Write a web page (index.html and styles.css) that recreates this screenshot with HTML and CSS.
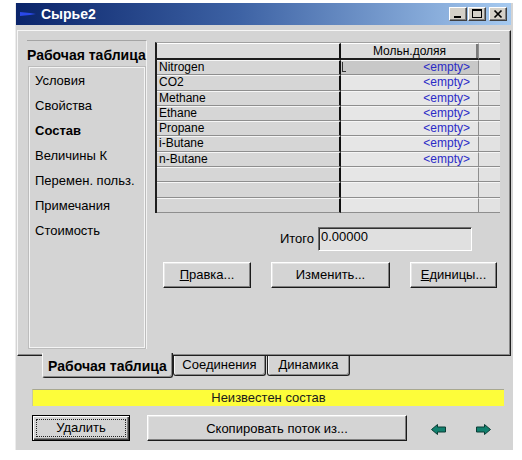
FILE: index.html
```html
<!DOCTYPE html>
<html lang="ru">

<head>
    <meta charset="UTF-8">
    <title>Сырье2</title>
    <link rel="stylesheet" href="styles.css">
</head>

<body>
    <div class="window">
        <div class="titlebar">
            <svg class="title-icon" width="16" height="8" viewBox="0 0 16 8">
                <polygon points="0,2 10,3 16,4 10,5 0,6" fill="#2a48e8" />
            </svg>
            <span class="title">Сырье2</span>
            <div class="title-buttons">
                <span class="tbtn"><svg width="16" height="12" viewBox="0 0 16 12"><rect x="4" y="8" width="7" height="2" fill="#000" /></svg></span>
                <span class="tbtn"><svg width="16" height="12" viewBox="0 0 16 12"><rect x="3.5" y="1.5" width="9" height="8" fill="none" stroke="#000" /><rect x="3" y="1" width="10" height="2" fill="#000" /></svg></span>
                <span class="tbtn close"><svg width="16" height="12" viewBox="0 0 16 12"><path d="M4.5 2.5 L11.5 9.5 M11.5 2.5 L4.5 9.5" stroke="#000" stroke-width="1.7" /></svg></span>
            </div>
        </div>

        <div class="tabpage">
            <div class="nav">
                <div class="nav-head">Рабочая таблица</div>
                <ul class="nav-list">
                    <li>Условия</li>
                    <li>Свойства</li>
                    <li class="current">Состав</li>
                    <li>Величины К</li>
                    <li>Перемен. польз.</li>
                    <li>Примечания</li>
                    <li>Стоимость</li>
                </ul>
            </div>

            <div class="main">
                <div class="grid">
                    <div class="row head">
                        <div class="c1"></div>
                        <div class="c2">Мольн.доляя</div>
                        <div class="c3"></div>
                    </div>
                    <div class="row">
                        <div class="c1">Nitrogen</div>
                        <div class="c2 sel"><span class="mark"></span>&lt;empty&gt;</div>
                        <div class="c3"></div>
                    </div>
                    <div class="row">
                        <div class="c1">CO2</div>
                        <div class="c2">&lt;empty&gt;</div>
                        <div class="c3"></div>
                    </div>
                    <div class="row">
                        <div class="c1">Methane</div>
                        <div class="c2">&lt;empty&gt;</div>
                        <div class="c3"></div>
                    </div>
                    <div class="row">
                        <div class="c1">Ethane</div>
                        <div class="c2">&lt;empty&gt;</div>
                        <div class="c3"></div>
                    </div>
                    <div class="row">
                        <div class="c1">Propane</div>
                        <div class="c2">&lt;empty&gt;</div>
                        <div class="c3"></div>
                    </div>
                    <div class="row">
                        <div class="c1">i-Butane</div>
                        <div class="c2">&lt;empty&gt;</div>
                        <div class="c3"></div>
                    </div>
                    <div class="row">
                        <div class="c1">n-Butane</div>
                        <div class="c2">&lt;empty&gt;</div>
                        <div class="c3"></div>
                    </div>
                    <div class="row">
                        <div class="c1"></div>
                        <div class="c2"></div>
                        <div class="c3"></div>
                    </div>
                    <div class="row">
                        <div class="c1"></div>
                        <div class="c2"></div>
                        <div class="c3"></div>
                    </div>
                    <div class="row">
                        <div class="c1"></div>
                        <div class="c2"></div>
                        <div class="c3"></div>
                    </div>
                </div>

                <div class="total">
                    <span>Итого</span>
                    <div class="field">0.00000</div>
                </div>

                <div class="actions">
                    <button class="btn w-edit"><u>П</u>равка...</button>
                    <button class="btn w-change">Изменить...</button>
                    <button class="btn w-units"><u>Е</u>диницы...</button>
                </div>
            </div>
        </div>

        <div class="tabs">
            <div class="tab active">Рабочая таблица</div>
            <div class="tab t-links">Соединения</div>
            <div class="tab t-dyn">Динамика</div>
        </div>

        <div class="status">Неизвестен состав</div>

        <div class="bottom">
            <button class="btn btn-default"><span>Удалить</span></button>
            <button class="btn w-copy">Скопировать поток из...</button>
            <svg class="arrow left" width="15" height="11" viewBox="0 0 15 11">
                <polygon points="0.5,5.5 6.5,0.5 6.5,3 14.5,3 14.5,8 6.5,8 6.5,10.5" fill="#11806e" stroke="#0b3d35" />
            </svg>
            <svg class="arrow right" width="15" height="11" viewBox="0 0 15 11">
                <polygon points="14.5,5.5 8.5,0.5 8.5,3 0.5,3 0.5,8 8.5,8 8.5,10.5" fill="#11806e" stroke="#0b3d35" />
            </svg>
        </div>
    </div>
</body>

</html>
```

FILE: styles.css
```css
* {
    box-sizing: border-box;
}

body {
    margin: 0;
    background: #fff;
    font-family: "Liberation Sans", Arial, sans-serif;
    font-size: 12px;
    color: #000;
}

.window {
    margin: 3px 0 0 15px;
    width: 498px;
    height: 447px;
    background: #d4d4d4;
    border-left: 1px solid #ececec;
    padding-right: 2px;
}

/* title bar */
.titlebar {
    height: 22px;
    display: flex;
    align-items: center;
    padding: 0 4px 0 4px;
    background: linear-gradient(90deg, #0a246a 0%, #3d62a4 45%, #a6caf0 100%);
}

.title-icon {
    margin-right: 5px;
}

.title {
    flex: 1;
    color: #fff;
    font-weight: bold;
    font-size: 14px;
}

.title-buttons {
    display: flex;
    gap: 1px;
}

.tbtn {
    width: 18px;
    height: 14px;
    background: #d4d0c8;
    border: 1px solid;
    border-color: #fff #404040 #404040 #fff;
    box-shadow: inset -1px -1px #808080;
    display: flex;
}

.tbtn.close {
    margin-left: 2px;
}

/* tab page */
.tabpage {
    margin: 5px 0 0 1px;
    height: 326px;
    display: flex;
    padding: 9px 8px 0 9px;
    border: 1px solid;
    border-color: #f6f6f6 #202020 #202020 #f6f6f6;
    box-shadow: inset -1px -1px #888;
}

.nav {
    width: 120px;
    height: 309px;
    display: flex;
    flex-direction: column;
    border-top: 1px solid #a4a4a4;
    border-right: 1px solid #f2f2f2;
}

.nav-head {
    height: 26px;
    line-height: 28px;
    font-weight: bold;
    font-size: 14px;
    white-space: nowrap;
}

.nav-list {
    flex: 1;
    list-style: none;
    margin: 0 1px 1px 2px;
    padding: 0 0 0 5px;
    border: 1px solid #f4f4f4;
    box-shadow: 0 0 0 1px #bcbcbc;
}

.nav-list li {
    height: 25px;
    line-height: 25px;
    font-size: 13px;
    white-space: nowrap;
}

.nav-list .current {
    font-weight: bold;
}

.main {
    margin-left: 8px;
    width: 345px;
    padding-top: 2px;
}

/* grid */
.grid {
    border-top: 1px solid #a0a0a0;
    border-left: 2px solid #1e1e1e;
}

.row {
    display: flex;
    height: 15.3px;
    line-height: 13px;
}

.row > div {
    border-top: 1px solid #f6f6f6;
    border-bottom: 1px solid #8e8e8e;
    white-space: nowrap;
}

.c1 {
    width: 184px;
    padding-left: 2px;
    background: #d6d6d6;
    border-right: 2px solid #101010;
}

.c2 {
    width: 138px;
    padding-right: 8px;
    text-align: right;
    color: #2b2bc6;
    background: #e6e6e6;
    border-right: 1px solid #8e8e8e;
}

.c3 {
    flex: 1;
    background: #e2e2e2;
}

.row.head {
    height: 17px;
    line-height: 15px;
}

.row.head > div {
    background: #dcdcdc;
    border-top: 1px solid #fff;
    border-bottom: 2px solid #1e1e1e;
}

.row.head .c2 {
    text-align: center;
    padding-right: 0;
    color: #000;
    box-shadow: inset -2px 0 #7a7a7a;
}

.c2.sel {
    background: #c8c8c8;
}

.mark {
    float: left;
    width: 4px;
    height: 10px;
    margin: 1px 0 0 1px;
    border-left: 1px solid #333;
    border-bottom: 1px solid #333;
}

/* total */
.total {
    display: flex;
    justify-content: flex-end;
    align-items: center;
    gap: 4px;
    margin-top: 14px;
    padding-right: 28px;
    font-size: 13px;
}

.field {
    width: 154px;
    height: 24px;
    padding: 1px 2px;
    line-height: 15px;
    background: #e0e0e0;
    border: 1px solid;
    border-color: #707070 #fff #fff #707070;
    box-shadow: inset 1px 1px #303030;
}

/* buttons */
.btn {
    height: 26px;
    padding: 0;
    font-family: inherit;
    font-size: 13px;
    color: #000;
    background: #d4d4d4;
    border: 1px solid;
    border-color: #fff #1a1a1a #1a1a1a #fff;
    box-shadow: inset -1px -1px #808080, inset 1px 1px #e6e6e6;
}

.actions {
    display: flex;
    gap: 20px;
    margin-top: 11px;
    padding-left: 8px;
}

.w-edit {
    width: 88px;
}

.w-change {
    width: 119px;
}

.w-units {
    width: 87px;
}

/* tabs under the page */
.tabs {
    display: flex;
    height: 22px;
    padding-left: 26px;
}

.tab {
    height: 20px;
    line-height: 18px;
    font-size: 13px;
    text-align: center;
    background: #d4d4d4;
    border: 1px solid #202020;
    border-top: none;
    border-radius: 0 0 3px 3px;
    box-shadow: inset 1px 0 #f4f4f4, inset -1px -1px #888;
}

.tab.active {
    width: 131px;
    height: 25px;
    margin-top: -3px;
    line-height: 26px;
    font-weight: bold;
    font-size: 14px;
    border-left: 1px solid #f6f6f6;
    box-shadow: inset -1px -1px #888;
}

.t-links {
    width: 93px;
}

.t-dyn {
    width: 83px;
    margin-left: 1px;
}

.status {
    margin: 11px 7px 0 16px;
    height: 17px;
    line-height: 16px;
    text-align: center;
    font-size: 13px;
    color: #1a1a1a;
    background: #fdfd3a;
    border-top: 1px solid #a8a890;
    border-left: 1px solid #c8c8a0;
}

.bottom {
    display: flex;
    align-items: center;
    margin: 9px 0 0 16px;
    height: 26px;
}

.btn-default {
    width: 98px;
    border: 1px solid #000;
    box-shadow: inset 1px 1px #fff, inset -1px -1px #404040, inset -2px -2px #808080;
}

.btn-default span {
    display: block;
    height: 18px;
    margin: 0 3px;
    line-height: 16px;
    border: 1px dotted #222;
}

.w-copy {
    width: 260px;
    margin-left: 17px;
}

.arrow.left {
    margin-left: 24px;
    margin-top: 3px;
}

.arrow.right {
    margin-left: 30px;
    margin-top: 3px;
}
```
